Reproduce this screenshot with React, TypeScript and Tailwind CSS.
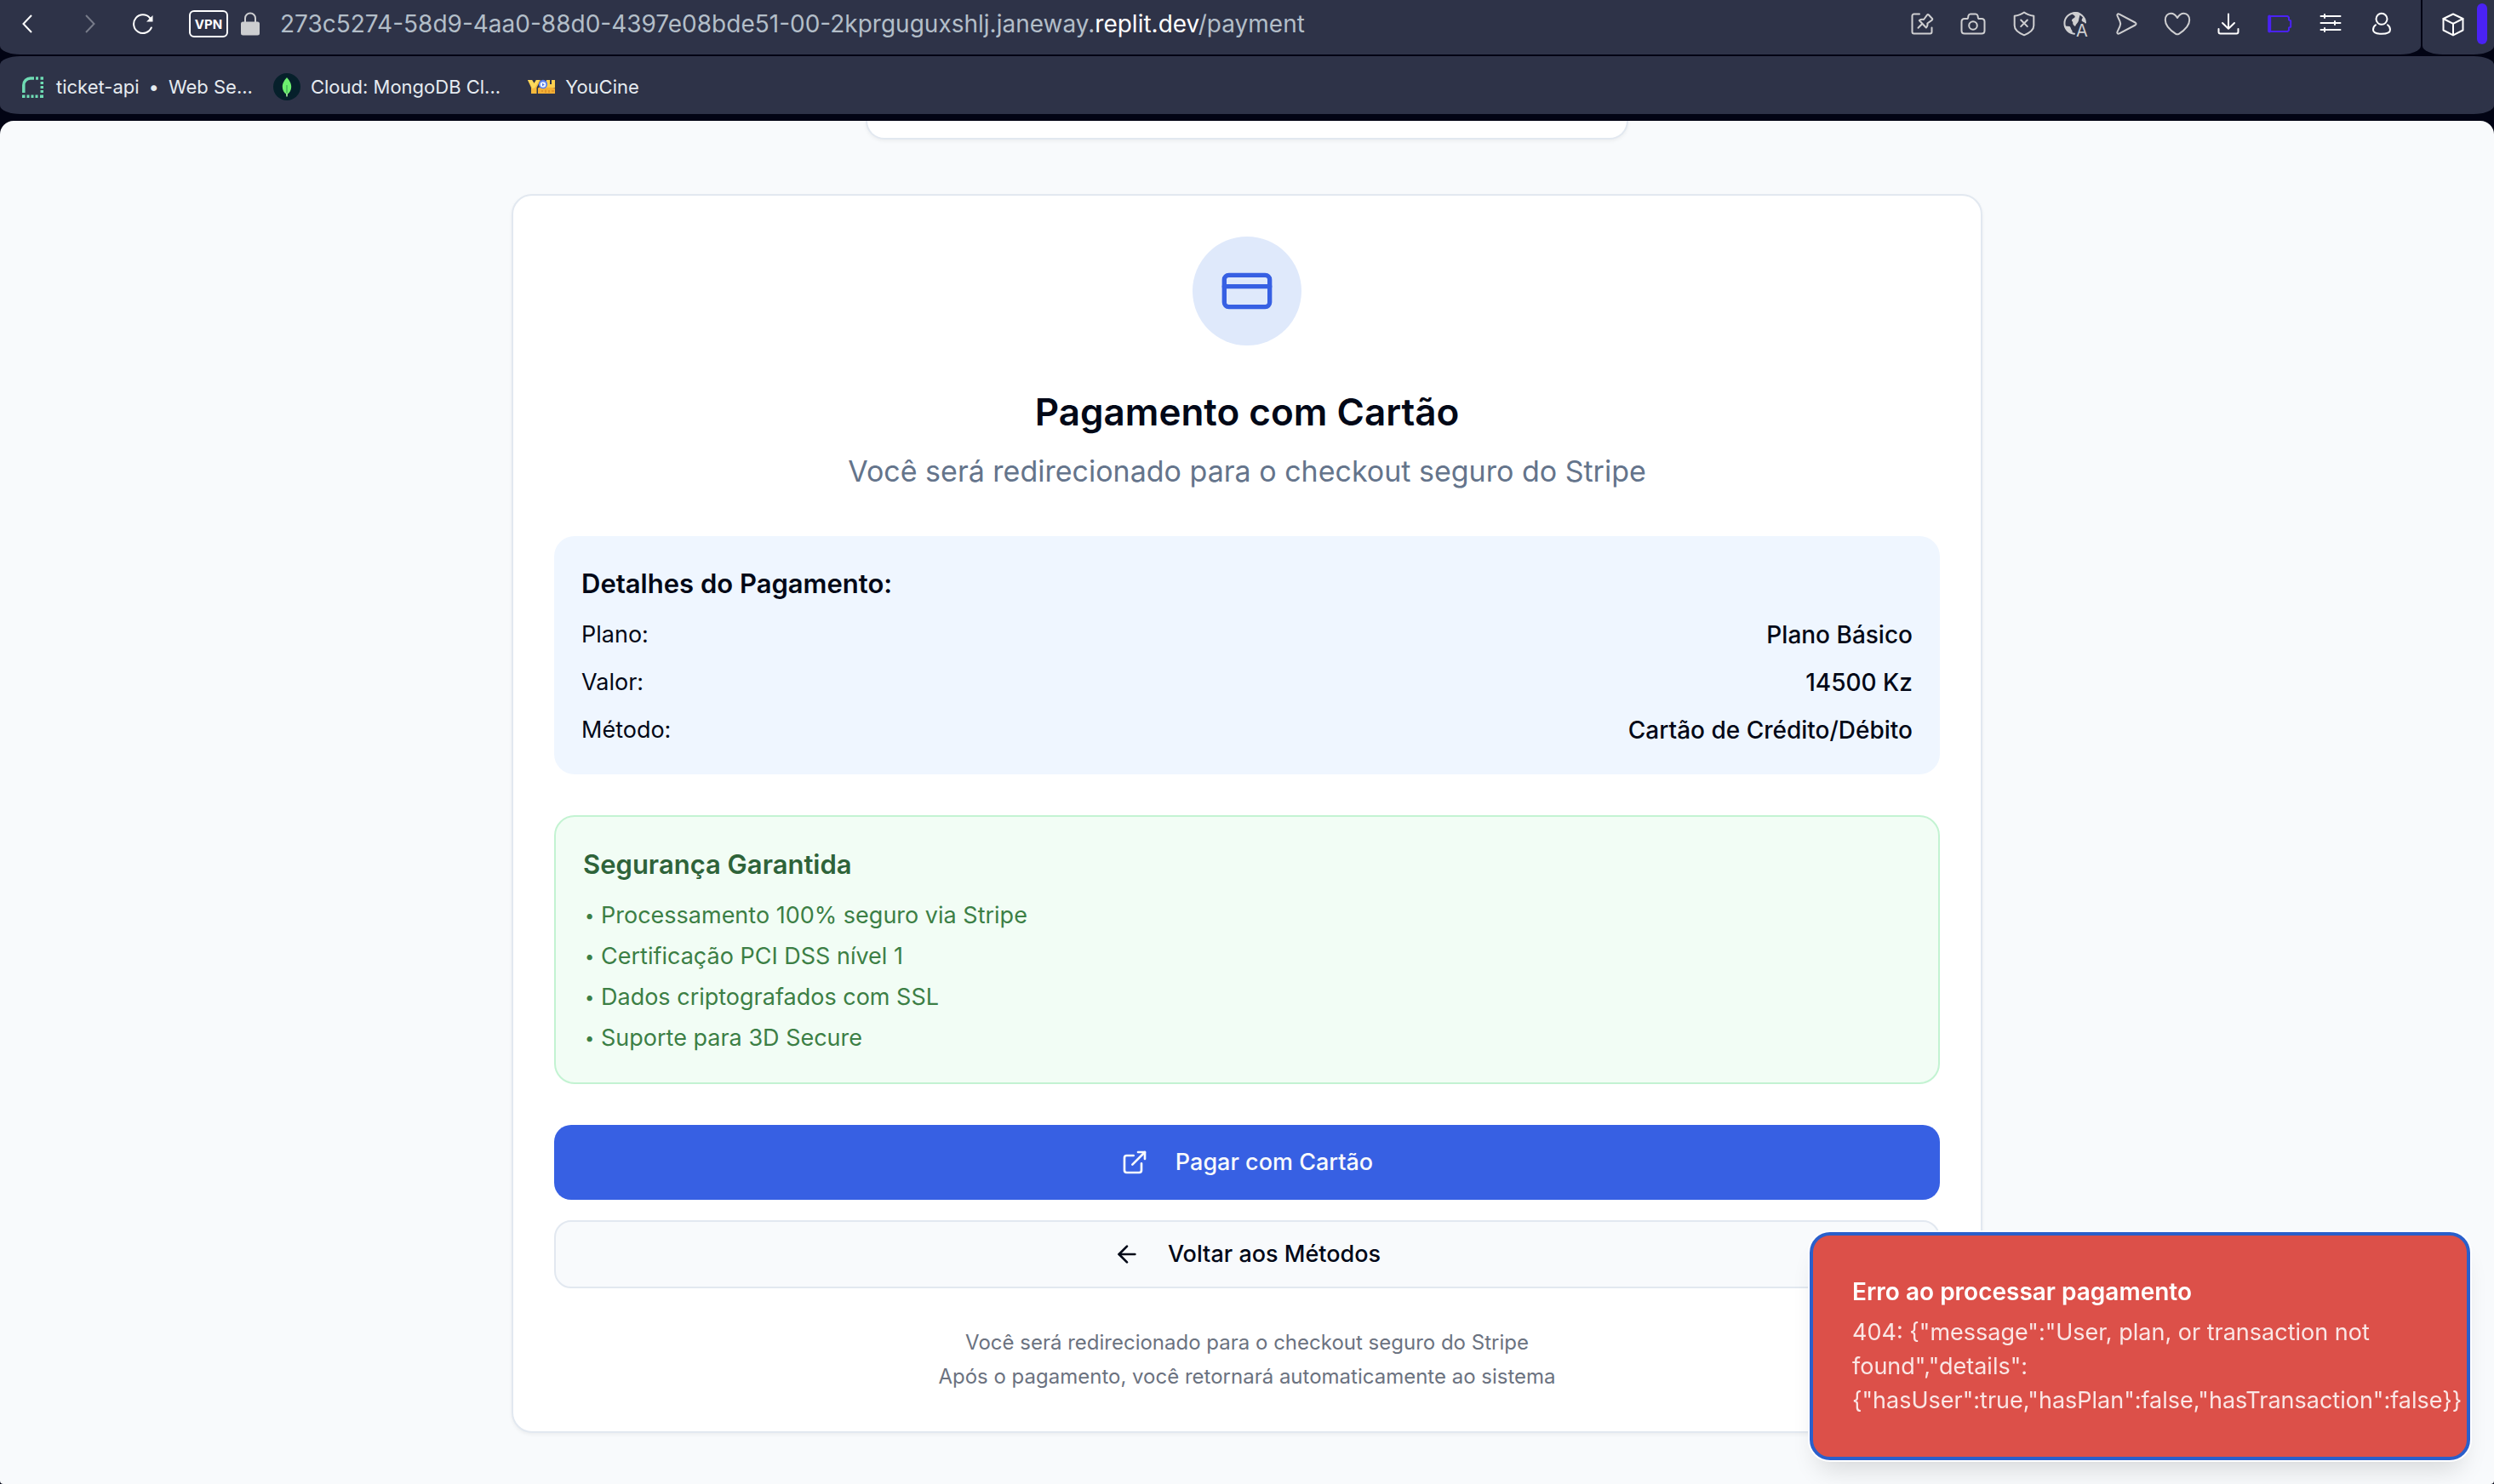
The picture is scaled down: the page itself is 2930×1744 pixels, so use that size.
import React from "react";
import { ArrowLeft, CreditCard, ExternalLink } from "lucide-react";

type IconProps = { children: React.ReactNode; className?: string; label: string };

function ToolButton({ children, className = "", label }: IconProps) {
  return (
    <button type="button" aria-label={label} className={`flex w-[60px] shrink-0 justify-center ${className}`}>
      <svg
        viewBox="0 0 30 30"
        className="size-[30px] overflow-visible"
        fill="none"
        stroke="currentColor"
        strokeWidth="2"
        strokeLinecap="round"
        strokeLinejoin="round"
      >
        {children}
      </svg>
    </button>
  );
}

function AddressBar() {
  return (
    <div className="flex h-16 min-w-0 flex-1 items-center bg-[#2e3348] pr-4 pb-2 pl-4 [border-radius:0_0_24px_24px/0_0_10px_10px]">
      <button type="button" aria-label="Voltar" className="flex w-8 shrink-0 justify-center text-white">
        <svg viewBox="0 0 12 22" className="h-[22px] w-3" fill="none" stroke="currentColor" strokeWidth="2">
          <path d="M11 1 1.500 11 11 21" />
        </svg>
      </button>
      <button type="button" aria-label="Avançar" className="ml-[42px] flex w-8 shrink-0 justify-center text-[#777b89]">
        <svg viewBox="0 0 12 22" className="h-[22px] w-3" fill="none" stroke="currentColor" strokeWidth="2">
          <path d="M1 1l9.500 10L1 21" />
        </svg>
      </button>
      <button type="button" aria-label="Recarregar" className="ml-[30px] flex w-8 shrink-0 justify-center text-white">
        <svg viewBox="0 0 26 26" className="size-[26px]" fill="none" stroke="currentColor" strokeWidth="2">
          <path d="M22.800 17.500A10.800 10.800 0 1 1 21 6" strokeLinecap="round" />
          <path d="M24.500 3v7.500H17Z" fill="currentColor" stroke="none" />
        </svg>
      </button>
      <button
        type="button"
        className="ml-[38px] flex h-8 w-[46px] shrink-0 items-center justify-center rounded-md border-2 border-white text-[15px] leading-none font-bold text-white"
      >
        VPN
      </button>
      <svg viewBox="0 0 22 28" className="ml-[15px] h-7 w-[22px] shrink-0 text-[#cdced0]">
        <path d="M5 13V7.500a6 6 0 0 1 12 0V13" fill="none" stroke="currentColor" strokeWidth="2" />
        <rect x="0" y="11.500" width="22" height="16" rx="2.500" fill="currentColor" />
      </svg>
      <a href="#payment" className="ml-6 min-w-0 flex-1 truncate text-[28px] leading-10 text-[#b3bec8]">
        273c5274-58d9-4aa0-88d0-4397e08bde51-00-2kprguguxshlj.janeway.<span className="text-white">replit.dev</span>
        /payment
      </a>
      <div className="flex shrink-0 items-center text-[#cfcfd1]">
        <ToolButton label="Fixar página">
          <path d="M12 3.500H5.500a2 2 0 0 0-2 2v19a2 2 0 0 0 2 2h19a2 2 0 0 0 2-2V19.500" />
          <path d="M10.500 19.700 15 15.200M11.800 11c1.800-1.400 3.600-1.500 5.200-1L21 4.600c.6-.7 1.300-.7 1.900-.1l4 4.200c.6.700.5 1.400-.2 1.900L21.300 14.500c.5 1.700.2 3.300-1.400 5Z" />
        </ToolButton>
        <ToolButton label="Captura">
          <path d="M8.500 9c1-.5.600-2 1-3.500.4-1.400 1.200-2 2.500-2h6c1.300 0 2.100.6 2.500 2 .4 1.500 0 3 1 3.500h3.500c2.200 0 3.500 1.300 3.500 3.500v10.500c0 2.200-1.300 3.500-3.500 3.500H5c-2.200 0-3.500-1.300-3.500-3.500V12.500C1.500 10.300 2.800 9 5 9Z" />
          <circle cx="15" cy="17" r="4.800" />
        </ToolButton>
        <ToolButton label="Bloqueador">
          <path d="M15 1.500c3 2.300 6.500 3.500 11.300 4.300V17c0 5.500-5 8.700-11.300 11.300C8.700 25.700 3.700 22.500 3.700 17V5.800C8.500 5 12 3.800 15 1.500Z" />
          <path d="m11.200 10.500 7.600 7.600m0-7.600-7.600 7.600" />
        </ToolButton>
        <ToolButton label="Traduzir">
          <path d="M14 26.700A12.300 12.300 0 1 1 27 13.500" />
          <path
            d="M11 2.200c3-1.800 8-1.400 10 1-.8 2.500-1.500 4.800-2 8-.6 2.800-3 3.500-4 6.800-2-1-3.200-3-2.800-5.300-1.600-.6-1.600-2.500-.4-3.500 1.600-1 3-1.300 3-3C14 4.500 11.500 4.500 11 2.200ZM3 17.500l5.500.5c1.500 1 1 3 2.500 4.500.8 1 .8 2.500.5 4C7 25.500 4 22 3 17.500ZM22.500 11c.5-2.500 1.800-4 3-4.300.8 2 1.300 4 1.300 6.800-1.500-.2-3.500-1-4.300-2.500Z"
            fill="currentColor"
            stroke="none"
          />
          <text x="16" y="30" fontSize="20" fill="currentColor" stroke="none">
            A
          </text>
        </ToolButton>
        <ToolButton label="Minha Flow">
          <path d="M6.800 3.700 25.500 13.500c1.400.8 1.400 2.200 0 3L6.800 26.300c-1.800.9-3-.2-2.300-2l3-6.500c1-2 1-3.600 0-5.600l-3-6.500c-.7-1.800.5-2.900 2.300-2Z" />
        </ToolButton>
        <ToolButton label="Favoritar">
          <path d="M15 8C13 4.500 10.300 2.800 7.300 2.800 3.500 2.800.8 6 .8 10.500.8 18 8 23.500 13.200 26.800c1.300.8 2.300.8 3.600 0C22 23.500 29.200 18 29.200 10.500c0-4.500-2.700-7.700-6.500-7.700-3 0-5.700 1.700-7.700 5.200Z" />
        </ToolButton>
        <ToolButton label="Transferências" className="text-white">
          <path d="M15 3.500v17M8 14l7 6.700L22 14M3.500 21v3.500a2 2 0 0 0 2 2h19a2 2 0 0 0 2-2V21" />
        </ToolButton>
        <ToolButton label="Bateria" className="text-[#4a22f4]">
          <path d="M3 6h21.500L26 7.500v2.800l2.200 1.200v7L26 19.700v2.800L24.500 24H3Z" />
          <path d="M3.200 6.500v17" strokeWidth="4" />
        </ToolButton>
        <ToolButton label="Configuração fácil" className="text-white">
          <path d="M3.500 6h23M3.500 14h23M3.500 22h23M8 4v4M20 12v4M8 20v4" />
        </ToolButton>
        <ToolButton label="Perfil" className="text-white">
          <circle cx="15" cy="9.300" r="6.500" />
          <path d="M8 16.300c-2 1.400-3 3.400-3 5.600 0 3.300 3.500 4.800 10 4.800s10-1.500 10-4.800c0-2.200-1-4.200-3-5.600" />
        </ToolButton>
      </div>
    </div>
  );
}

function SidePanelTab() {
  return (
    <div className="flex h-16 w-[84px] shrink-0 items-center bg-[#2e3348] pb-2 pl-1.5 text-white [border-radius:0_0_24px_24px/0_0_10px_10px]">
      <ToolButton label="Extensões">
        <path d="M15 3.500 26.500 9v13.500L15 28.300 3.500 22.500V9Z" />
        <path d="M3.500 9 15 14.800 26.500 9M15 14.800v13.500" />
      </ToolButton>
      <div className="-ml-0.5 h-12 w-3 rounded-full bg-[#4a22f4]" />
    </div>
  );
}

function BookmarksBar() {
  return (
    <nav className="flex h-[68px] items-center bg-[#2e3348] pt-1 pl-[26px] text-[22px] leading-8 text-[#e6ebf0] [border-radius:24px/10px]">
      <a href="#ticket-api" className="flex items-center gap-[15px]">
        <svg viewBox="0 0 25 25" className="size-[25px]" fill="none" stroke="#6fdcb4">
          <path d="M1.800 19V10a8 8 0 0 1 8-8H14" strokeWidth="3.500" />
          <path d="M16 2h3M21.500 2h3.500" strokeWidth="3.500" />
          <path d="M23.300 6v3M23.300 11v3M23.300 16v3M0 23.200h3.500M5.500 23.200h3M10.500 23.200h3M15.500 23.200h3M21 23.200h4" strokeWidth="3.500" />
        </svg>
        <span className="flex gap-[11px]">
          <span>ticket-api</span>
          <span>•</span>
          <span>Web Se...</span>
        </span>
      </a>
      <a href="#mongodb" className="ml-[24px] flex items-center gap-[12px]">
        <svg viewBox="0 0 32 32" className="size-8">
          <circle cx="16" cy="16" r="16" fill="#06202b" />
          <path d="M16 5c2.500 3 5.200 6.500 5.200 11 0 4-2 7-4.400 8.600L16 27l-.8-2.400C12.800 23 10.800 20 10.800 16 10.800 11.500 13.500 8 16 5Z" fill="#6df06f" />
          <path d="M16 14v10" stroke="#2f9a4c" strokeWidth="1" />
          <path d="M16 23.500v4" stroke="#a9f5a3" strokeWidth="1.500" />
        </svg>
        Cloud: MongoDB Cl...
      </a>
      <a href="#youcine" className="ml-8 flex items-center gap-[12px]">
        <svg viewBox="0 0 32 16" className="h-4 w-8 overflow-visible">
          <path d="M0 0h5l2.500 4L10 0h5l-4.500 9v7H4V9Z" fill="#f6b93b" />
          <path d="M0 0h5l2.500 4L10 0h4L8.500 9l-3 1Z" fill="#fbd95c" />
          <path d="M22 0h4v5h2V0h4v9H20Z" fill="#fbcf4f" />
          <path d="M12 9.500c2-1.500 4-1 6 0 2-1 12-1 14 0V16H12Z" fill="#f3b035" />
          <path d="M16 13h2M21 11.500V15M25 12v3M28 13h3" stroke="#cf7d1f" strokeWidth="1" fill="none" />
          <circle cx="18" cy="5" r="5.200" fill="#5b7fe8" />
          <circle cx="18" cy="5.500" r="3.300" fill="#e9f3ff" />
          <path d="M17 3.800v3.400l2.800-1.700Z" fill="#4f6fe0" />
        </svg>
        YouCine
      </a>
    </nav>
  );
}

const details = [
  { label: "Plano:", value: "Plano Básico" },
  { label: "Valor:", value: "14500 Kz" },
  { label: "Método:", value: "Cartão de Crédito/Débito" },
];

const guarantees = [
  "Processamento 100% seguro via Stripe",
  "Certificação PCI DSS nível 1",
  "Dados criptografados com SSL",
  "Suporte para 3D Secure",
];

function PaymentCard() {
  return (
    <section className="w-full max-w-[1728px] rounded-3xl border-2 border-[#e2e8f0] bg-white px-12 pt-12 pb-11 shadow-[0_2px_4px_rgba(0,0,0,0.05)]">
      <header className="flex flex-col items-center text-center">
        <div className="flex size-32 items-center justify-center rounded-full bg-[#dfe9fb]">
          <CreditCard className="size-16 text-[#3760e3]" strokeWidth={2} />
        </div>
        <h1 className="mt-12 text-[44px] leading-[60px] font-semibold text-[#020817]">Pagamento com Cartão</h1>
        <p className="mt-3 text-[34px] leading-[56px] text-[#64748b]">
          Você será redirecionado para o checkout seguro do Stripe
        </p>
      </header>

      <div className="mt-12 rounded-3xl bg-[#eff6ff] p-8 text-[#020817]">
        <h2 className="text-[31px] leading-[48px] font-semibold">Detalhes do Pagamento:</h2>
        <dl className="mt-4 flex flex-col gap-4">
          {details.map((row) => (
            <div key={row.label} className="flex justify-between leading-10">
              <dt className="text-[27px]">{row.label}</dt>
              <dd className="text-[28px] font-medium">{row.value}</dd>
            </div>
          ))}
        </dl>
      </div>

      <div className="mt-12 rounded-3xl border-2 border-[#c3f3d2] bg-[#f2fdf5] p-8">
        <h2 className="text-[31px] leading-[48px] font-semibold text-[#2e6339]">Segurança Garantida</h2>
        <ul className="mt-4 flex flex-col gap-2 text-[27px] leading-10 text-[#3c7f45]">
          {guarantees.map((item) => (
            <li key={item} className="flex">
              <span className="w-[21px] pl-0.5 text-[20px]">•</span>
              {item}
            </li>
          ))}
        </ul>
      </div>

      <button
        type="button"
        className="mt-12 flex h-[88px] w-full items-center justify-center gap-8 rounded-[20px] bg-[#3760e3] text-[27px] font-medium text-[#f8fafc]"
      >
        <ExternalLink className="size-8" strokeWidth={2} />
        Pagar com Cartão
      </button>
      <button
        type="button"
        className="mt-6 flex h-20 w-full items-center justify-center gap-8 rounded-[20px] border-2 border-[#e2e8f0] bg-[#f8fafc] text-[27px] font-medium text-[#020817]"
      >
        <ArrowLeft className="size-8" strokeWidth={2} />
        Voltar aos Métodos
      </button>

      <footer className="mt-11 text-center text-[24px] leading-10 text-[#6b7280]">
        <p>Você será redirecionado para o checkout seguro do Stripe</p>
        <p>Após o pagamento, você retornará automaticamente ao sistema</p>
      </footer>
    </section>
  );
}

const errorMessage =
  '404: {"message":"User, plan, or transaction not found","details":{"hasUser":true,"hasPlan":false,"hasTransaction":false}}';

function ErrorToast() {
  return (
    <div
      role="alert"
      className="fixed right-8 bottom-8 w-[768px] rounded-[20px] border-2 border-[#dc5049] bg-[#dc5049] pt-12 pr-16 pb-11 pl-11 text-white shadow-[0_0_0_4px_#2a5fcb,0_0_0_6px_#ffffff,0_20px_30px_-6px_rgba(0,0,0,0.14),0_8px_12px_-8px_rgba(0,0,0,0.1)]"
    >
      <p className="text-[28px] leading-8 font-semibold">Erro ao processar pagamento</p>
      <p className="mt-3 text-[27px] leading-10 text-[#fae6e5]">{errorMessage}</p>
    </div>
  );
}

export default function App() {
  return (
    <div className="flex min-h-screen flex-col bg-[#020414] font-[Inter,sans-serif]">
      <div className="flex gap-0.5">
        <AddressBar />
        <SidePanelTab />
      </div>
      <div className="mt-0.5">
        <BookmarksBar />
      </div>
      <main className="mt-2 flex flex-1 flex-col items-center rounded-t-2xl rounded-b-[4px] bg-[#f8fafc] px-8 pb-[60px]">
        <div className="h-[22px] w-full max-w-[896px] rounded-b-3xl border-2 border-t-0 border-[#e2e8f0] bg-white shadow-[0_2px_4px_rgba(0,0,0,0.05)]" />
        <div className="mt-16 flex w-full justify-center">
          <PaymentCard />
        </div>
      </main>
      <ErrorToast />
    </div>
  );
}
